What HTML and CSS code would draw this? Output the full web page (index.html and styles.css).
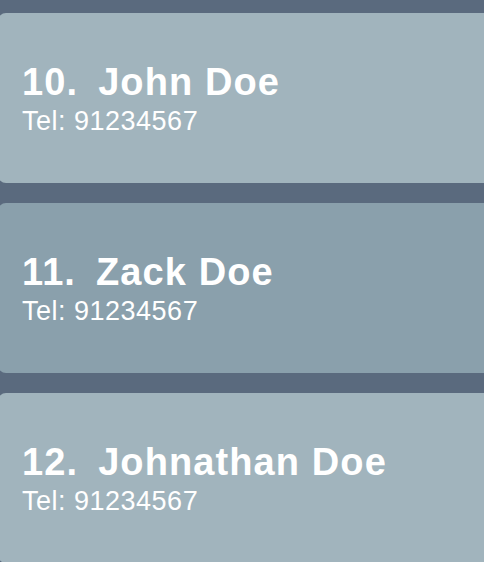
FILE: index.html
```html
<!DOCTYPE html>
<html>
<head>
<meta charset="utf-8">
<link rel="stylesheet" href="styles.css">
</head>
<body>
<div class="list">
  <div class="card card-light">
    <div class="name"><span class="idx">10.</span>John Doe</div>
    <div class="tel">Tel: 91234567</div>
  </div>
  <div class="card card-mid">
    <div class="name"><span class="idx">11.</span>Zack Doe</div>
    <div class="tel">Tel: 91234567</div>
  </div>
  <div class="card card-light">
    <div class="name"><span class="idx">12.</span>Johnathan Doe</div>
    <div class="tel">Tel: 91234567</div>
  </div>
</div>
</body>
</html>
```

FILE: styles.css
```css
html, body {
  margin: 0;
  padding: 0;
  background: #5a6a7e;
  overflow: hidden;
}
body {
  width: 484px;
  height: 562px;
  font-family: "Liberation Sans", Arial, sans-serif;
  color: #ffffff;
}
.list {
  display: flex;
  flex-direction: column;
  gap: 20px;
  padding-top: 13px;
}
.card {
  box-sizing: border-box;
  height: 170px;
  width: 540px;
  margin-left: -2px;
  border-radius: 8px;
  padding: 48px 0 0 24px;
}
.card-light { background: #a1b4bd; }
.card-mid { background: #8aa0ac; }
.name {
  font-size: 38px;
  font-weight: bold;
  line-height: 42px;
  letter-spacing: 1.1px;
  white-space: nowrap;
}
.idx {
  margin-right: 20px;
}
.tel {
  font-size: 27px;
  line-height: 30px;
  letter-spacing: 0.5px;
  margin-top: 3px;
  white-space: nowrap;
}
```
